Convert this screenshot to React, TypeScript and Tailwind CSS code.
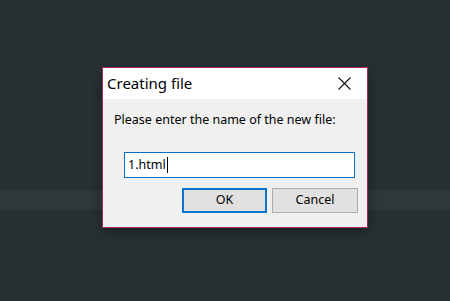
import React from "react";

export default function App() {
  return (
    <div className="relative w-[450px] h-[301px] overflow-hidden bg-[#283034]" style={{ fontFamily: '"Noto Sans", "Open Sans", sans-serif' }}>
      <div className="flex flex-col h-full">
        <div className="h-[190px]" />
        <div className="h-[20px] bg-[#30383c]" />
        <div className="flex-1" />
      </div>

      <div className="absolute left-[102px] top-[67px] w-[266px] h-[161px] border border-[#a6285f] bg-[#f0f0f0] flex flex-col shadow-[0_4px_14px_rgba(0,0,0,0.35)]">
        <div className="h-[31px] bg-white flex items-center justify-between pl-[4px] pr-[16px]">
          <span className="text-[15px] text-black leading-none">Creating file</span>
          <svg width="13" height="13" viewBox="0 0 13 13">
            <path d="M0.5 0.5 L12.5 12.5 M12.5 0.5 L0.5 12.5" stroke="#111" strokeWidth="1.1" fill="none" />
          </svg>
        </div>
        <div className="flex flex-col pl-[11px] pr-[9px]">
          <div className="mt-[13px] text-[12.5px] text-black leading-[16px]">Please enter the name of the new file:</div>
          <div className="mt-[24px] ml-[10px] mr-[3px] h-[26px] bg-white border border-[#0a6fc2] flex items-center pl-[3px] text-[12.5px] text-black">
            <span>1.html</span>
            <span className="w-px h-[16px] bg-black ml-[1px]" />
          </div>
          <div className="mt-[10px] flex justify-end gap-[5px]">
            <div className="w-[85px] h-[25px] bg-[#e1e1e1] border-2 border-[#0a74d0] flex items-center justify-center text-[12.5px] text-black">OK</div>
            <div className="w-[86px] h-[25px] bg-[#e1e1e1] border border-[#adadad] flex items-center justify-center text-[12.5px] text-black">Cancel</div>
          </div>
        </div>
      </div>
    </div>
  );
}
